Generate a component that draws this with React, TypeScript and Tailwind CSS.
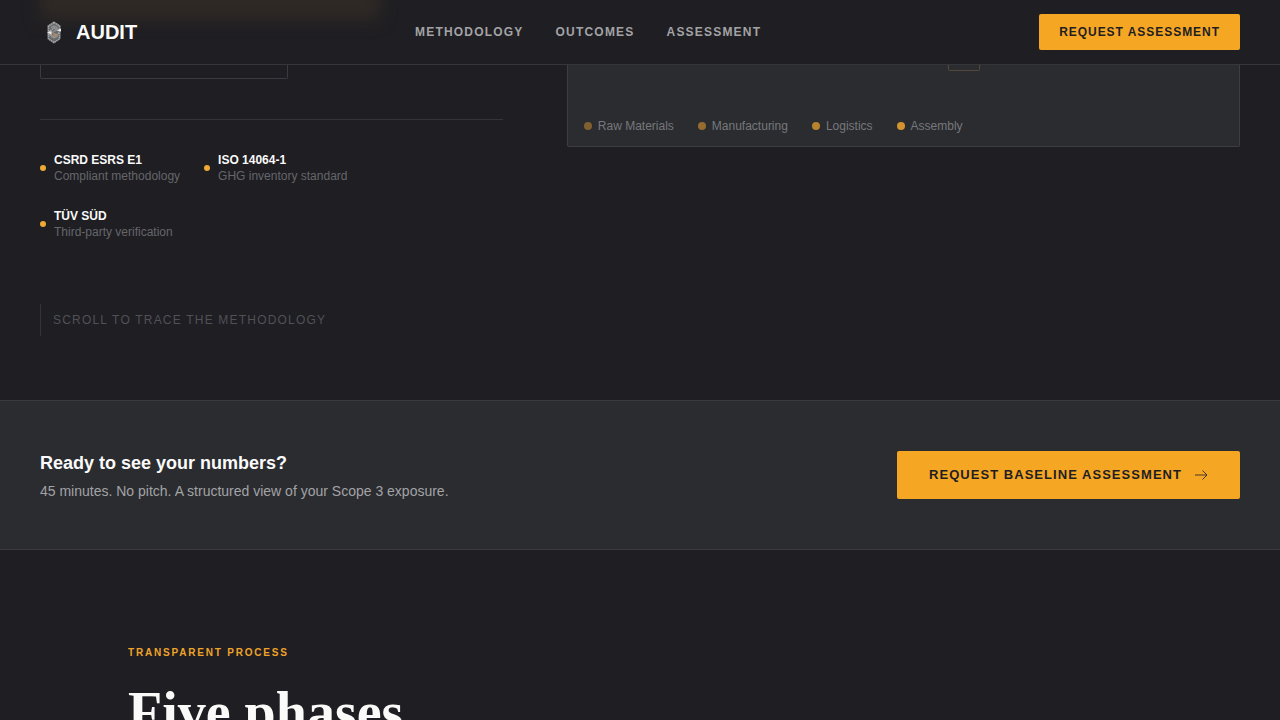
const sans = "font-['Liberation_Sans',Arial,sans-serif]";

const navLinks = [
  { label: "Methodology", href: "#methodology" },
  { label: "Outcomes", href: "#outcomes" },
  { label: "Assessment", href: "#assessment" },
];

const credentials = [
  { title: "CSRD ESRS E1", detail: "Compliant methodology" },
  { title: "ISO 14064-1", detail: "GHG inventory standard" },
  { title: "TÜV SÜD", detail: "Third-party verification" },
];

const tiers = [
  { label: "Raw Materials", dot: "bg-[#80602e]" },
  { label: "Manufacturing", dot: "bg-[#966c30]" },
  { label: "Logistics", dot: "bg-[#b9822d]" },
  { label: "Assembly", dot: "bg-[#d3942f]" },
];

function LogoMark() {
  return (
    <svg className="size-7" viewBox="0 0 28 28" fill="none" aria-hidden="true">
      <path d="M14 3.5 20.5 7.5v13L14 25.5 7.5 20.5v-13z" fill="#66686a" />
      <path d="M14 4.5 19.5 8v5L14 10 8.5 14V8zM14 24.5 8.5 21v-5l5.5 3 5.5-4.5V21z" stroke="#a5a7a7" strokeWidth="1.5" strokeDasharray="1.5 0.6" />
      <path d="M11 9.5 14 8l3 1.500v2L11.500 15v3.500l2.500 1.500 3-1.500v-2" stroke="#8d8f90" strokeWidth="1.4" />
      <path d="m17 12.500 4-2v3zM7 14.500l4.500-1.500v3.500z" fill="#ececea" />
      <path d="m13 14.500 4 1.500-1 3-2.500-1z" fill="#b18768" />
    </svg>
  );
}

function Header() {
  return (
    <header className="sticky top-0 z-10 border-b border-[#35363a] bg-[#1f1e22]">
      <div className="pointer-events-none absolute inset-0 overflow-hidden">
        <div className="absolute -top-6 left-10 h-11 w-[340px] bg-[#2f2925] blur-[8px]" />
      </div>
      <div className="relative flex h-16 items-center justify-between px-10">
        <a href="#top" className="flex items-center gap-2 text-xl font-bold text-[#fafafa]">
          <LogoMark />
          AUDIT
        </a>
        <nav aria-label="Main" className="flex gap-8">
          {navLinks.map((link) => (
            <a key={link.label} href={link.href} className="text-xs font-bold uppercase tracking-widest text-[#a3a3a6]">
              {link.label}
            </a>
          ))}
        </nav>
        <button type="button" className="rounded-xs bg-[#f5a623] px-5 py-[10px] text-xs font-bold uppercase tracking-[0.08em] text-[#1e1e23]">
          Request Assessment
        </button>
      </div>
    </header>
  );
}

function Hero() {
  return (
    <section className="grid grid-cols-[11fr_16fr] items-start gap-16 px-10 pb-16">
      <div>
        <div className="h-[14px] w-62 rounded-b-xs border border-t-0 border-[#3a3b40]" />
        <ul className="mt-10 flex flex-wrap gap-6 border-t border-[#34353a] pt-8">
          {credentials.map((item) => (
            <li key={item.title} className="flex items-center gap-2 text-xs">
              <span className="size-[6px] rounded-full bg-[#efa935]" />
              <div>
                <p className="font-bold text-[#fafafa]">{item.title}</p>
                <p className="text-[#66666a]">{item.detail}</p>
              </div>
            </li>
          ))}
        </ul>
        <p className="mt-16 border-l border-[#333439] py-2 pl-3 text-xs uppercase tracking-widest text-[#515156]">
          Scroll to trace the methodology
        </p>
      </div>
      <div className="rounded-b-xs border border-t-0 border-[#3d3e42] bg-[#2a2c30] px-4 pb-3">
        <div className="flex h-[53px] justify-center">
          <div className="ml-[121px] h-[6px] w-8 rounded-b-xs border border-t-0 border-[#54493d]" />
        </div>
        <ul className="flex flex-wrap gap-6 text-xs text-[#77787b]">
          {tiers.map((tier) => (
            <li key={tier.label} className="flex items-center gap-[6px]">
              <span className={`size-2 rounded-full ${tier.dot}`} />
              {tier.label}
            </li>
          ))}
        </ul>
      </div>
    </section>
  );
}

function Callout() {
  return (
    <section className="flex items-center justify-between border-y border-[#3a3b40] bg-[#2a2c30] px-10 py-12">
      <div>
        <h2 className="text-lg font-bold leading-7 text-[#fafafa]">Ready to see your numbers?</h2>
        <p className="mt-1 text-sm text-[#a3a3a6]">45 minutes. No pitch. A structured view of your Scope 3 exposure.</p>
      </div>
      <button type="button" className="flex items-center gap-3 rounded-xs bg-[#f5a623] px-8 py-[14px] text-[13px] font-bold uppercase leading-5 tracking-[0.08em] text-[#1e1e23]">
        Request Baseline Assessment
        <svg width="14" height="14" viewBox="0 0 14 14" fill="none" stroke="currentColor" strokeOpacity="0.8" strokeWidth="1" aria-hidden="true">
          <path d="M1 7h12M8.500 2.500 13 7l-4.500 4.500" />
        </svg>
      </button>
    </section>
  );
}

export default function App() {
  return (
    <div id="top" className={`min-h-screen bg-[#1e1e23] ${sans}`}>
      <Header />
      <main>
        <Hero />
        <Callout />
        <section className="mx-auto max-w-5xl pt-24">
          <p className="text-[10px] font-bold uppercase leading-[14px] tracking-[0.18em] text-[#efa32b]">Transparent process</p>
          <h2 className="mt-5 font-['Liberation_Serif',serif] text-[56px] font-bold leading-16 text-[#fafaf8]">Five phases</h2>
        </section>
      </main>
    </div>
  );
}
